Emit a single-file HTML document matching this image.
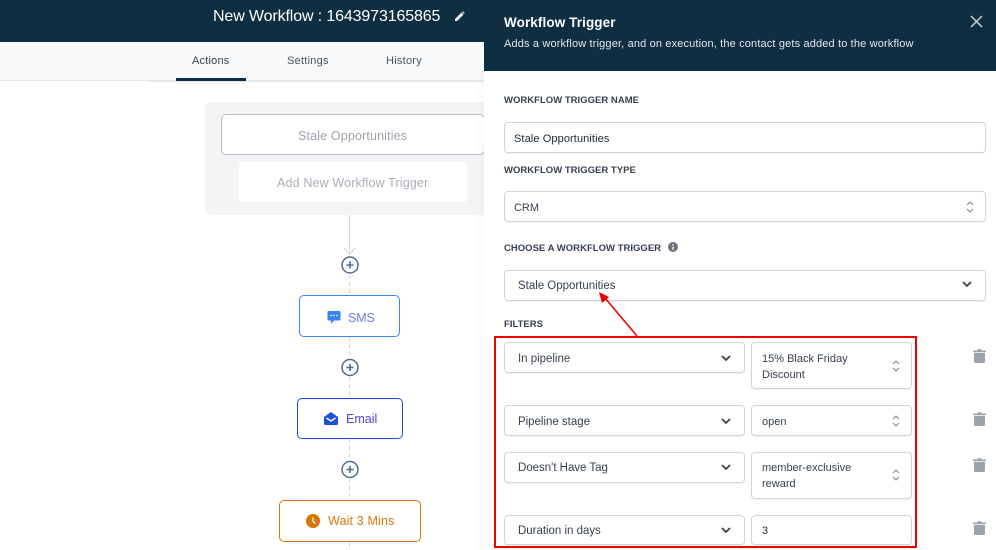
<!DOCTYPE html>
<html><head><meta charset="utf-8">
<style>
html,body{margin:0;padding:0;background:#fff}
#p{position:relative;width:996px;height:550px;overflow:hidden;background:#fff;font-family:"Liberation Sans",sans-serif}
#p div,#p svg{position:absolute;box-sizing:border-box}
.t{white-space:nowrap}
.f{background:#fff;border:1px solid #d1d5db;border-radius:4px;box-shadow:0 1px 1px rgba(0,0,0,.06)}
.x{font-size:11.5px;color:#374151;white-space:nowrap;letter-spacing:-.02px;line-height:16px}
.r{font-size:11px;letter-spacing:0;color:#374151}
.l{font-size:9.5px;font-weight:bold;color:#374151;white-space:nowrap;line-height:12px;letter-spacing:.02px}
.n{background:#fff;border-radius:5px;border:1px solid}
</style></head><body><div id="p">
<div style="left:0;top:0;width:484px;height:42px;background:#0e2e42"></div>
<div class="t" style="left:213px;top:7px;font-size:16px;line-height:20px;color:#fff;letter-spacing:-.13px">New Workflow : 1643973165865</div>
<svg style="left:454px;top:11px" width="11" height="11" viewBox="0 0 11 11"><path d="M1 10V8L7.5 1.5L9.5 3.5L3 10Z M8.2 1L9 .3L10.7 2L10 2.8Z" fill="#fff"/></svg>
<div style="left:0;top:42px;width:484px;height:39px;background:#f8f9fb;border-bottom:1px solid #e5e7eb"></div>
<div style="left:150px;top:80px;width:334px;height:2px;background:#e5e7eb"></div>
<div style="left:176px;top:78px;width:70px;height:3px;background:#0e2e42"></div>
<div class="t" style="left:192px;top:53px;font-size:11px;line-height:16px;color:#374151;letter-spacing:.2px">Actions</div>
<div class="t" style="left:287px;top:53px;font-size:11px;line-height:16px;color:#4b5563;letter-spacing:.25px">Settings</div>
<div class="t" style="left:386px;top:53px;font-size:11px;line-height:16px;color:#4b5563;letter-spacing:.25px">History</div>

<div style="left:205px;top:102px;width:290px;height:113px;background:#f3f4f6;border-radius:6px"></div>
<div style="left:221px;top:114px;width:264px;height:41px;background:#fff;border:1px solid #b6bcc6;border-radius:5px"></div>
<div class="t" style="left:298px;top:128px;font-size:12.5px;line-height:17px;color:#9ca3af;letter-spacing:.15px">Stale Opportunities</div>
<div style="left:239px;top:162px;width:228px;height:40px;background:#fff;border-radius:3px"></div>
<div class="t" style="left:277px;top:175px;font-size:12.5px;line-height:17px;color:#a9afb9;letter-spacing:.15px">Add New Workflow Trigger</div>

<svg style="left:335px;top:215px" width="30" height="335" viewBox="0 0 30 335">
<path d="M14.500 0V40M9 33L14.500 39L20 33" stroke="#d1d5db" fill="none"/>
<path d="M14.500 60V80M14.500 122V143M14.500 162V183M14.500 224V245M14.500 264V285M14.500 327V335" stroke="#d1d5db" stroke-dasharray="4 3" fill="none"/>
<g fill="#fff" stroke="#4f6b8c" stroke-width="1.500"><circle cx="15" cy="50" r="8"/><circle cx="15" cy="152.500" r="8"/><circle cx="15" cy="254.500" r="8"/></g>
<path d="M11.500 50H18.500M15 46.500V53.500M11.500 152.500H18.500M15 149V156M11.500 254.500H18.500M15 251V258" stroke="#4f6b8c" stroke-width="1.600"/>
</svg>

<div class="n" style="left:299px;top:295px;width:101px;height:42px;border-color:#3b82f6"></div>
<svg style="left:327px;top:310px" width="14" height="15" viewBox="0 0 14 15"><path d="M1.500 1H12.500Q13.500 1 13.500 2V9.500Q13.500 10.500 12.500 10.500H7L4 14V10.500H1.500Q.5 10.500 .5 9.500V2Q.5 1 1.500 1Z" fill="#3b82f6"/><path d="M3.500 5.500H5M6.200 5.500H7.700M9 5.500H10.500" stroke="#fff" stroke-width="1.300"/></svg>
<div class="t" style="left:348px;top:310px;font-size:12.500px;line-height:17px;color:#6b7cf6;letter-spacing:-.1px">SMS</div>

<div class="n" style="left:297px;top:398px;width:106px;height:41px;border-color:#1d4ed8"></div>
<svg style="left:324px;top:412px" width="14" height="13" viewBox="0 0 14 13"><path d="M0 5L7 0L14 5V11.500Q14 13 12.500 13H1.500Q0 13 0 11.500Z" fill="#1d4ed8"/><path d="M2.500 6L7 9L11.500 6" stroke="#fff" stroke-width="1.400" fill="none"/></svg>
<div class="t" style="left:346px;top:411px;font-size:12.500px;line-height:17px;color:#4f46e5">Email</div>

<div class="n" style="left:279px;top:500px;width:142px;height:42px;border-color:#d97706"></div>
<svg style="left:306px;top:514px" width="14" height="14" viewBox="0 0 14 14"><circle cx="7" cy="7" r="7" fill="#d97706"/><path d="M7 3.500V7.500L9.500 9.500" stroke="#fff" stroke-width="1.300" fill="none"/></svg>
<div class="t" style="left:328px;top:513px;font-size:12.500px;line-height:17px;color:#d97706;letter-spacing:.15px">Wait 3 Mins</div>

<div style="left:476px;top:71px;width:8px;height:479px;background:linear-gradient(90deg,rgba(0,0,0,0),rgba(0,0,0,.025))"></div>
<div style="left:484px;top:0;width:512px;height:550px;background:#fff"></div>
<div style="left:484px;top:0;width:512px;height:71px;background:#0e2e42"></div>
<div class="t" style="left:504px;top:14px;font-size:13.500px;line-height:17px;font-weight:bold;color:#fff;letter-spacing:.1px">Workflow Trigger</div>
<div class="t" style="left:504px;top:37px;font-size:11px;line-height:14px;color:#e5e7eb;letter-spacing:.15px">Adds a workflow trigger, and on execution, the contact gets added to the workflow</div>
<svg style="left:970px;top:15px" width="13" height="13" viewBox="0 0 13 13"><path d="M1 1L12 12M12 1L1 12" stroke="#d1d5db" stroke-width="1.500"/></svg>

<div class="l" style="left:504px;top:95px">WORKFLOW TRIGGER NAME</div>
<div class="f" style="left:504px;top:122px;width:482px;height:31px"></div>
<div class="x" style="left:514px;top:131px;color:#1f2937;font-size:11px;letter-spacing:.1px">Stale Opportunities</div>
<div class="l" style="left:504px;top:165px">WORKFLOW TRIGGER TYPE</div>
<div class="f" style="left:504px;top:191px;width:482px;height:31px"></div>
<div class="x" style="left:514px;top:200px;font-size:11px">CRM</div>
<svg style="left:965px;top:200px" width="10" height="14" viewBox="0 0 10 14"><path d="M2 5L5 2L8 5M2 9L5 12L8 9" stroke="#7f8896" stroke-width="1.100" fill="none"/></svg>
<div class="l" style="left:504px;top:243px">CHOOSE A WORKFLOW TRIGGER</div>
<svg style="left:668px;top:242px" width="10" height="10" viewBox="0 0 10 10"><circle cx="5" cy="5" r="5" fill="#6b7280"/><path d="M5 4.500V7.800M5 2V3.400" stroke="#fff" stroke-width="1.300"/></svg>
<div class="f" style="left:504px;top:270px;width:482px;height:31px"></div>
<div class="x" style="left:518px;top:278px">Stale Opportunities</div>
<svg style="left:961px;top:280px" width="12" height="8" viewBox="0 0 12 8"><path d="M2 2L6 6L10 2" stroke="#374151" stroke-width="1.800" fill="none"/></svg>
<div class="l" style="left:504px;top:319px">FILTERS</div>

<div class="f" style="left:504px;top:342px;width:241px;height:31px"></div>
<div class="x" style="left:518px;top:351px">In pipeline</div>
<svg style="left:720px;top:354px" width="12" height="8" viewBox="0 0 12 8"><path d="M2 2L6 6L10 2" stroke="#374151" stroke-width="1.800" fill="none"/></svg>
<div class="f" style="left:751px;top:342px;width:161px;height:47px"></div>
<div class="x r" style="left:762px;top:351px">15% Black Friday</div>
<div class="x r" style="left:762px;top:367px">Discount</div>
<svg style="left:891px;top:359px" width="10" height="14" viewBox="0 0 10 14"><path d="M2 5L5 2L8 5M2 9L5 12L8 9" stroke="#7f8896" stroke-width="1.100" fill="none"/></svg>

<div class="f" style="left:504px;top:405px;width:241px;height:31px"></div>
<div class="x" style="left:518px;top:414px">Pipeline stage</div>
<svg style="left:720px;top:417px" width="12" height="8" viewBox="0 0 12 8"><path d="M2 2L6 6L10 2" stroke="#374151" stroke-width="1.800" fill="none"/></svg>
<div class="f" style="left:751px;top:405px;width:161px;height:31px"></div>
<div class="x r" style="left:762px;top:414px">open</div>
<svg style="left:891px;top:414px" width="10" height="14" viewBox="0 0 10 14"><path d="M2 5L5 2L8 5M2 9L5 12L8 9" stroke="#7f8896" stroke-width="1.100" fill="none"/></svg>

<div class="f" style="left:504px;top:452px;width:241px;height:31px"></div>
<div class="x" style="left:518px;top:460px">Doesn't Have Tag</div>
<svg style="left:720px;top:463px" width="12" height="8" viewBox="0 0 12 8"><path d="M2 2L6 6L10 2" stroke="#374151" stroke-width="1.800" fill="none"/></svg>
<div class="f" style="left:751px;top:452px;width:161px;height:47px"></div>
<div class="x r" style="left:762px;top:460px">member-exclusive</div>
<div class="x r" style="left:762px;top:476px">reward</div>
<svg style="left:891px;top:468px" width="10" height="14" viewBox="0 0 10 14"><path d="M2 5L5 2L8 5M2 9L5 12L8 9" stroke="#7f8896" stroke-width="1.100" fill="none"/></svg>

<div class="f" style="left:504px;top:515px;width:241px;height:30px"></div>
<div class="x" style="left:518px;top:523px">Duration in days</div>
<svg style="left:720px;top:526px" width="12" height="8" viewBox="0 0 12 8"><path d="M2 2L6 6L10 2" stroke="#374151" stroke-width="1.800" fill="none"/></svg>
<div class="f" style="left:751px;top:515px;width:161px;height:30px"></div>
<div class="x r" style="left:762px;top:523px;color:#1f2937">3</div>

<svg style="left:973px;top:349px" width="13" height="14" viewBox="0 0 13 14"><path d="M0 1.500H4.500V.3H8.500V1.500H13V3H0ZM1 3.800H12V12.500Q12 14 10.500 14H2.500Q1 14 1 12.500Z" fill="#9ca3af"/></svg>
<svg style="left:973px;top:412px" width="13" height="14" viewBox="0 0 13 14"><path d="M0 1.500H4.500V.3H8.500V1.500H13V3H0ZM1 3.800H12V12.500Q12 14 10.500 14H2.500Q1 14 1 12.500Z" fill="#9ca3af"/></svg>
<svg style="left:973px;top:458px" width="13" height="14" viewBox="0 0 13 14"><path d="M0 1.500H4.500V.3H8.500V1.500H13V3H0ZM1 3.800H12V12.500Q12 14 10.500 14H2.500Q1 14 1 12.500Z" fill="#9ca3af"/></svg>
<svg style="left:973px;top:521px" width="13" height="14" viewBox="0 0 13 14"><path d="M0 1.500H4.500V.3H8.500V1.500H13V3H0ZM1 3.800H12V12.500Q12 14 10.500 14H2.500Q1 14 1 12.500Z" fill="#9ca3af"/></svg>

<div style="left:494px;top:336px;width:423px;height:212px;border:2px solid #ee0000"></div>
<svg style="left:590px;top:285px" width="60" height="60" viewBox="0 0 60 60"><path d="M47 51L15 13" stroke="#ee0000" stroke-width="1.500" fill="none"/><path d="M9 7L19 12L12 18Z" fill="#ee0000"/></svg>
</div></body></html>
